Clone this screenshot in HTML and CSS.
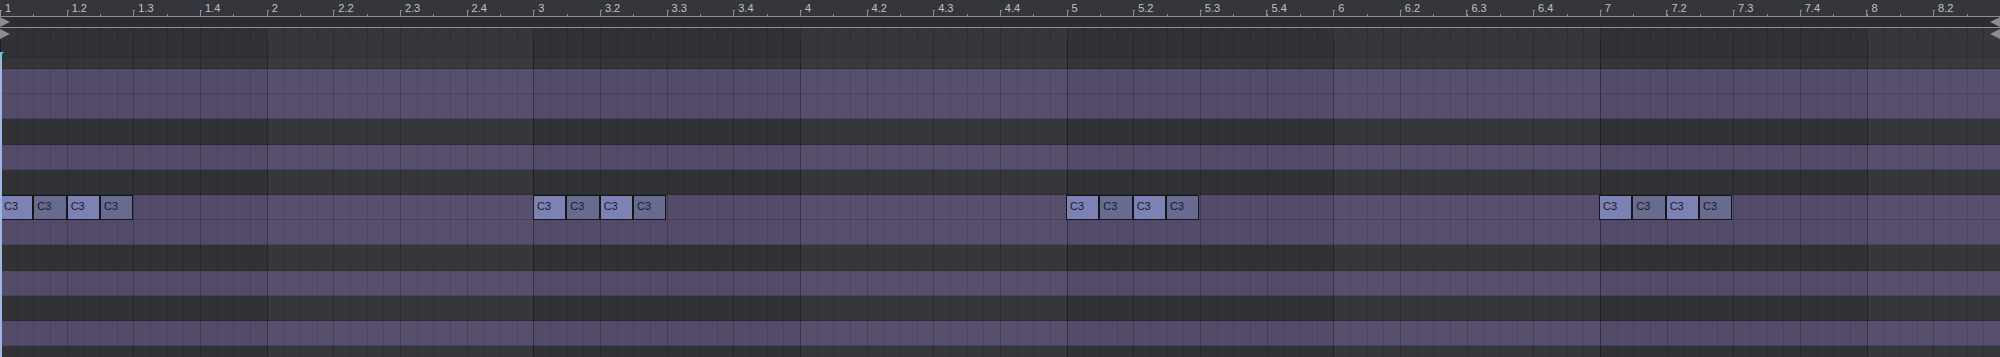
FILE: index.html
```html
<!DOCTYPE html>
<html>
<head>
  <meta charset="UTF-8">
  <link rel="stylesheet" href="styles.css">
</head>
<body>
  <div class="roll">
    <div class="ruler">
      <div class="beat"><span class="tick"></span>1</div>
      <div class="beat"><span class="tick"></span>1.2</div>
      <div class="beat"><span class="tick"></span>1.3</div>
      <div class="beat"><span class="tick"></span>1.4</div>
      <div class="beat"><span class="tick"></span>2</div>
      <div class="beat"><span class="tick"></span>2.2</div>
      <div class="beat"><span class="tick"></span>2.3</div>
      <div class="beat"><span class="tick"></span>2.4</div>
      <div class="beat"><span class="tick"></span>3</div>
      <div class="beat"><span class="tick"></span>3.2</div>
      <div class="beat"><span class="tick"></span>3.3</div>
      <div class="beat"><span class="tick"></span>3.4</div>
      <div class="beat"><span class="tick"></span>4</div>
      <div class="beat"><span class="tick"></span>4.2</div>
      <div class="beat"><span class="tick"></span>4.3</div>
      <div class="beat"><span class="tick"></span>4.4</div>
      <div class="beat"><span class="tick"></span>5</div>
      <div class="beat"><span class="tick"></span>5.2</div>
      <div class="beat"><span class="tick"></span>5.3</div>
      <div class="beat"><span class="tick"></span>5.4</div>
      <div class="beat"><span class="tick"></span>6</div>
      <div class="beat"><span class="tick"></span>6.2</div>
      <div class="beat"><span class="tick"></span>6.3</div>
      <div class="beat"><span class="tick"></span>6.4</div>
      <div class="beat"><span class="tick"></span>7</div>
      <div class="beat"><span class="tick"></span>7.2</div>
      <div class="beat"><span class="tick"></span>7.3</div>
      <div class="beat"><span class="tick"></span>7.4</div>
      <div class="beat"><span class="tick"></span>8</div>
      <div class="beat"><span class="tick"></span>8.2</div>
    </div>

    <div class="loop-band">
      <span class="flag flag-left"></span>
      <span class="flag flag-right"></span>
    </div>
    <div class="marker-band">
      <span class="flag flag-left"></span>
      <span class="flag flag-right"></span>
    </div>

    <div class="lanes">
      <div class="lane lane-black lane-top"></div>
      <div class="lane lane-shade"></div>
      <div class="lane lane-white"></div>
      <div class="lane lane-white"></div>
      <div class="lane lane-black"></div>
      <div class="lane lane-white"></div>
      <div class="lane lane-black"></div>
      <div class="lane lane-white notes">
        <div class="note note-hi" style="grid-column: 1 / span 2">C3</div>
        <div class="note note-lo" style="grid-column: 3 / span 2">C3</div>
        <div class="note note-hi" style="grid-column: 5 / span 2">C3</div>
        <div class="note note-lo" style="grid-column: 7 / span 2">C3</div>
        <div class="note note-hi" style="grid-column: 33 / span 2">C3</div>
        <div class="note note-lo" style="grid-column: 35 / span 2">C3</div>
        <div class="note note-hi" style="grid-column: 37 / span 2">C3</div>
        <div class="note note-lo" style="grid-column: 39 / span 2">C3</div>
        <div class="note note-hi" style="grid-column: 65 / span 2">C3</div>
        <div class="note note-lo" style="grid-column: 67 / span 2">C3</div>
        <div class="note note-hi" style="grid-column: 69 / span 2">C3</div>
        <div class="note note-lo" style="grid-column: 71 / span 2">C3</div>
        <div class="note note-hi" style="grid-column: 97 / span 2">C3</div>
        <div class="note note-lo" style="grid-column: 99 / span 2">C3</div>
        <div class="note note-hi" style="grid-column: 101 / span 2">C3</div>
        <div class="note note-lo" style="grid-column: 103 / span 2">C3</div>
      </div>
      <div class="lane lane-white"></div>
      <div class="lane lane-black"></div>
      <div class="lane lane-white"></div>
      <div class="lane lane-black"></div>
      <div class="lane lane-white"></div>
      <div class="lane lane-black"></div>

      <div class="start-marker"></div>
    </div>
  </div>
</body>
</html>
```

FILE: styles.css
```css
    html, body {
      margin: 0;
      padding: 0;
      background-color: #2b2d31;
    }
    body {
      width: 2000px;
      height: 357px;
      overflow: hidden;
      font-family: "Liberation Sans", Arial, sans-serif;
    }
    .roll {
      display: flex;
      flex-direction: column;
      width: 2000px;
    }

    /* ruler with beat numbers */
    .ruler {
      display: grid;
      grid-template-columns: repeat(30, 66.6667px);
      height: 16px;
      background-color: #34363b;
      background-image: repeating-linear-gradient(to right, #8d8f93 0 1px, transparent 1px 33.3333px);
      background-size: 100% 2px;
      background-position: 0 bottom;
      background-repeat: no-repeat;
      border-bottom: 1px solid #8d8f93;
    }
    .beat {
      display: flex;
      align-items: flex-end;
      gap: 4px;
      font-size: 11px;
      line-height: 14px;
      color: #c2c2c4;
      padding-bottom: 1px;
    }
    .tick {
      align-self: flex-end;
      width: 1px;
      height: 6px;
      margin-bottom: -1px;
      background-color: #8d8f93;
      position: relative;
    }
    .tick:before {
      content: "";
      position: absolute;
      top: 0;
      left: 0;
      width: 2px;
      height: 1px;
      background-color: #8d8f93;
    }

    /* loop and marker bands */
    .loop-band {
      display: flex;
      justify-content: space-between;
      align-items: center;
      height: 10px;
      background-color: #2b2d31;
      border-bottom: 1px solid #8d8f93;
    }
    .marker-band {
      display: flex;
      justify-content: space-between;
      align-items: center;
      height: 12px;
      background-color: #303237;
      background-image:
        repeating-linear-gradient(to right, transparent 0 266.6667px, rgba(255,255,255,0.025) 266.6667px 533.3333px),
        repeating-linear-gradient(to right, rgba(0,0,0,0.18) 0 1px, transparent 1px 16.6667px);
    }
    .flag {
      width: 0;
      height: 0;
      border-top: 5px solid transparent;
      border-bottom: 5px solid transparent;
    }
    .flag-left {
      border-left: 10px solid #8b8d92;
    }
    .flag-right {
      border-right: 10px solid #8b8d92;
    }

    /* note lanes */
    .lanes {
      position: relative;
      display: flex;
      flex-direction: column;
    }
    .lane {
      height: 25.2px;
      box-shadow: inset 0 -1px 0 rgba(0,0,0,0.14);
      background-image:
        repeating-linear-gradient(to right, transparent 0 266.6667px, rgba(255,255,255,0.025) 266.6667px 533.3333px),
        repeating-linear-gradient(to right, rgba(0,0,0,0.22) 0 1px, transparent 1px 266.6667px),
        repeating-linear-gradient(to right, rgba(0,0,0,0.12) 0 1px, transparent 1px 66.6667px),
        repeating-linear-gradient(to right, rgba(0,0,0,0.1) 0 1px, transparent 1px 16.6667px);
    }
    .lane-top {
      height: 18px;
      background-color: #2a2c30;
    }
    .lane-shade {
      height: 11px;
      background-color: #333539;
    }
    .lane-white {
      background-color: #544b6a;
    }
    .lane-black {
      background-color: #303236;
    }
    .notes {
      display: grid;
      grid-template-columns: repeat(120, 16.6667px);
      align-items: stretch;
    }
    .note {
      box-sizing: border-box;
      border: 1.5px solid #15151a;
      font-size: 11px;
      line-height: 21px;
      padding-left: 3px;
      color: #1b1b26;
    }
    .note-hi {
      background-color: #7c82b3;
    }
    .note-lo {
      background-color: #666b8f;
    }
    .start-marker {
      position: absolute;
      left: 0;
      top: 13px;
      bottom: 0;
      width: 2px;
      background-color: #9fb6e0;
    }
    .start-marker:before {
      content: "";
      position: absolute;
      top: -1px;
      left: 0;
      border-top: 4px solid #3fd6e6;
      border-right: 4px solid transparent;
    }
```
